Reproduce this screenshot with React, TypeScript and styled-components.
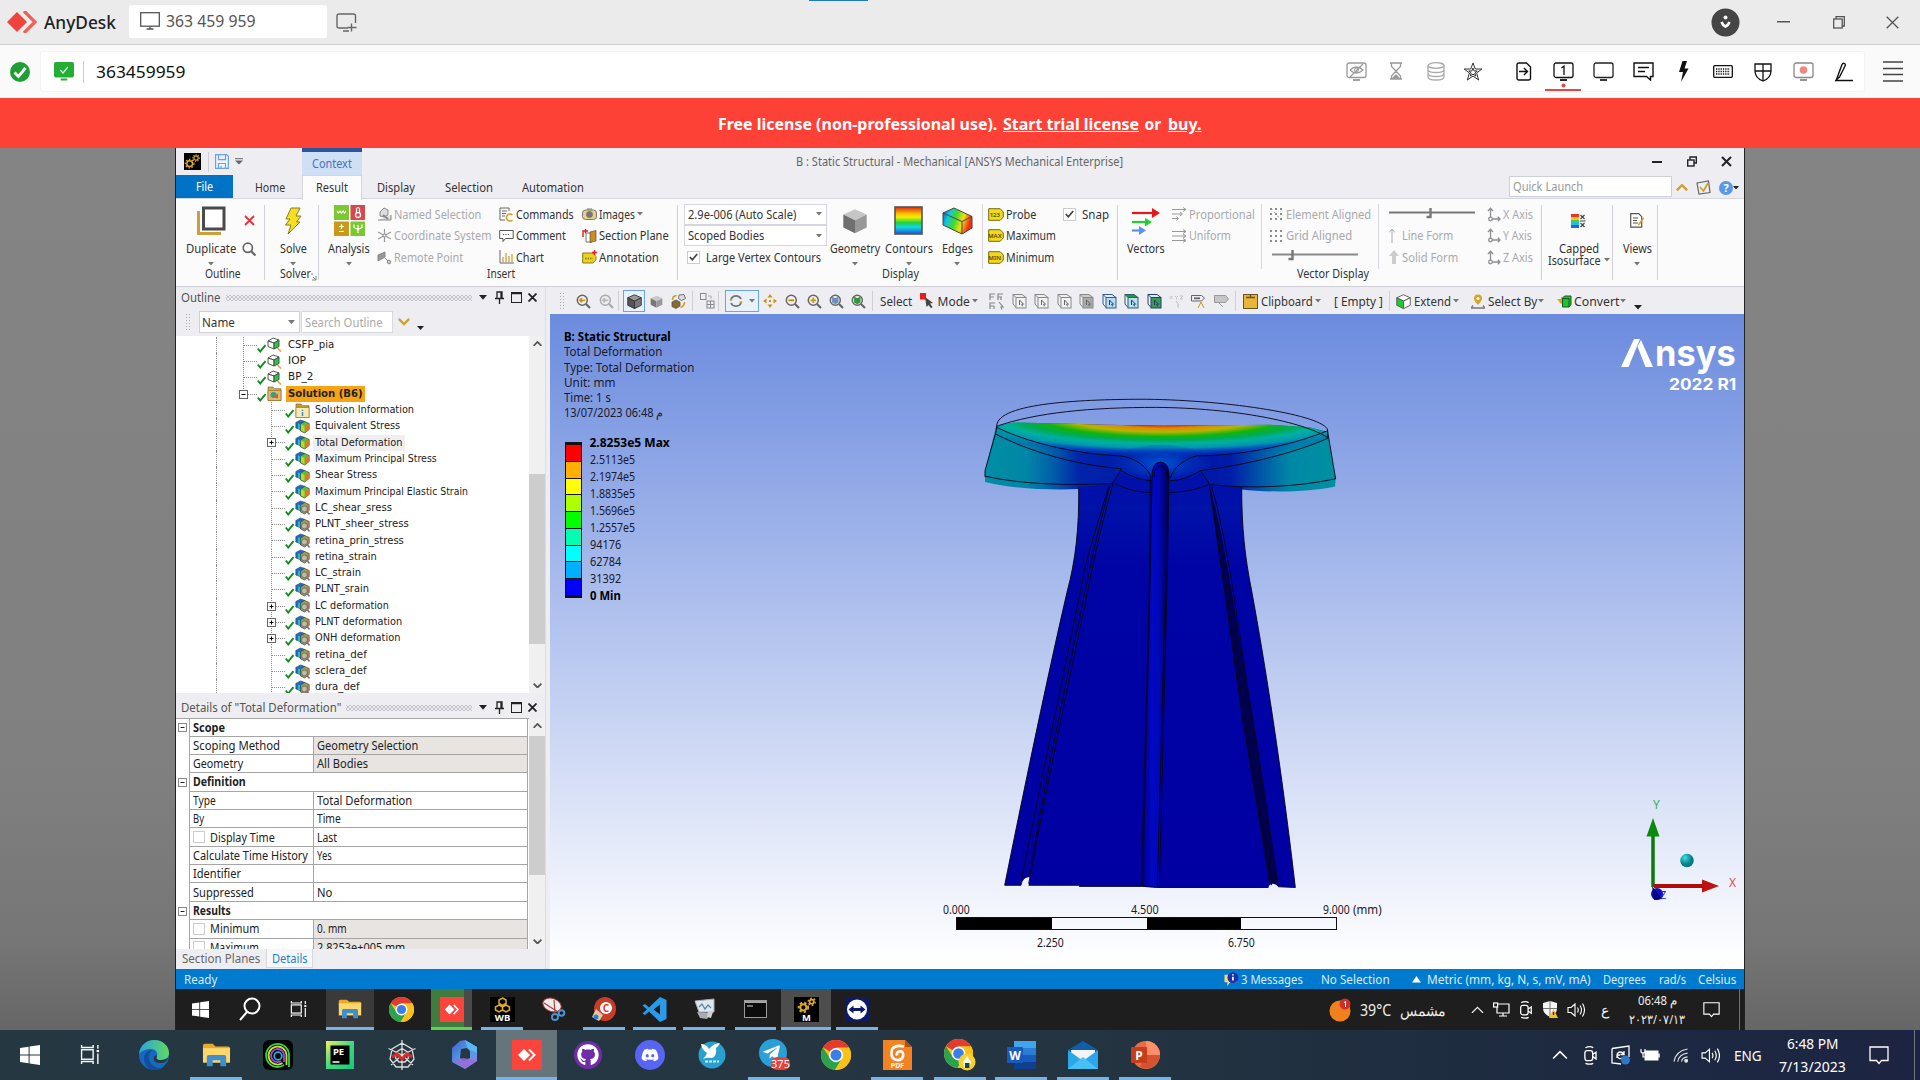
import React, { useLayoutEffect, useRef, useState } from "react";
import styled, { createGlobalStyle } from "styled-components";
import { FaGithub, FaDiscord, FaTelegramPlane } from "react-icons/fa";

const UI = '"Noto Sans", "Open Sans", sans-serif';
const TREE = '"DejaVu Sans", sans-serif';

const Global = createGlobalStyle`
  * { box-sizing: border-box; }
  html, body { margin: 0; padding: 0; overflow: hidden; background: #808080; }
  body { font-family: ${UI}; font-size: 12px; color: #333; }
  svg { display: block; flex: none; }
`;

/* ---------- text that keeps a given advance width ---------- */
const FitBox = styled.span<{ $w: number }>`
  display: inline-block; flex: none; width: ${(p) => p.$w}px; white-space: nowrap;
`;
const FitInner = styled.span`
  display: inline-block; transform-origin: 0 50%; white-space: pre;
`;
function Fit({ w, children }: { w: number; children: React.ReactNode }) {
  const ref = useRef<HTMLSpanElement>(null);
  const [k, setK] = useState(1);
  useLayoutEffect(() => {
    const n = ref.current ? ref.current.offsetWidth : 0;
    if (n) setK(w / n);
  }, [w]);
  return (
    <FitBox $w={w}>
      <FitInner ref={ref} style={{ transform: `scaleX(${k})` }}>{children}</FitInner>
    </FitBox>
  );
}

/* ---------- generic pieces ---------- */
const Gap = styled.div<{ $w: number }>`flex: none; width: ${(p) => p.$w}px;`;
const PanelGap = styled.div`flex: none; height: 4px;`;
const Slot = styled.div<{ $w: number; $f?: number }>`
  flex: none; width: ${(p) => p.$w}px; display: flex; align-items: center; justify-content: center; font-size: ${(p) => p.$f ?? 12}px;
`;
const Caret = ({ c = "#777", s = 7 }: { c?: string; s?: number }) => (
  <svg width={s} height={s * 0.6} viewBox="0 0 10 6"><path d="M0 0H10L5 6Z" fill={c} /></svg>
);

/* ---------- AnyDesk window ---------- */
const Page = styled.div`width: 1920px; height: 1080px; display: flex; flex-direction: column; overflow: hidden;`;
const TitleBar = styled.div`
  position: relative; height: 45px; flex: none; display: flex; align-items: center; background: #ebebeb;
  border-bottom: 1px solid #cfcfcf; padding-left: 7px;
`;
const TopMark = styled.div`position: absolute; left: 809px; top: 0; width: 59px; height: 1px; background: #1f78c8;`;
const Brand = styled.div`font-size: 18px; font-weight: 500; color: #222; margin-left: 7px; line-height: 42px;`;
const SessionTab = styled.div`
  margin: 0 9px 2px 13px; width: 198px; height: 33px; background: #fff; border-radius: 2px; display: flex; align-items: center;
  padding: 0 0 1px 11px; gap: 6px; font-size: 16.5px; color: #555;
`;
const WinButtons = styled.div`margin-left: auto; display: flex; align-items: center; color: #555;`;
const AddressBar = styled.div`
  height: 53px; flex: none; background: #fafafa; display: flex; align-items: center; padding-left: 10px;
`;
const AddressField = styled.div`
  margin-left: 10px; width: 1825px; height: 41px; background: #fff; border: 1px solid #f3f3f3; border-radius: 3px;
  display: flex; align-items: center; padding-left: 13px; font-size: 17px; color: #111;
`;
const FieldSep = styled.div`width: 1px; height: 22px; background: #ccc; margin: 0 12px 0 9px;`;
const ActiveTool = styled.div`
  flex: none; width: 36px; height: 39px; border-bottom: 2px solid #e04a44; display: flex; flex-direction: column; align-items: center; padding-top: 10px;
`;
const LicenseBar = styled.div`
  height: 50px; flex: none; background: #fe4137; color: #fff; font-weight: 700; font-size: 15.5px;
  display: flex; align-items: center; justify-content: center; gap: 6px; padding: 2px 2px 0 0;
`;
const Link = styled.span`text-decoration: none;`;
const Stage = styled.div`
  height: 882px; flex: none; display: flex; padding-left: 175px;
  background: linear-gradient(#848484 0%, #808080 70%, #767676 90%, #666 100%);
`;

/* ---------- remote desktop ---------- */
const Remote = styled.div`
  width: 1570px; height: 882px; border-left: 1px solid #222; border-right: 1px solid #222; background: #eeeef2;
  display: flex; flex-direction: column; overflow: hidden;
`;
const AppTitle = styled.div`height: 27px; flex: none; display: flex; align-items: center; color: #666;`;
const Context = styled.div`
  width: 60px; height: 27px; background: #cfdff5; border-top: 4px solid #2b569a; color: #4a72b8; display: flex; justify-content: center;
  align-items: center; padding: 0 1px 1px 0;
`;
const TabRow = styled.div`height: 23px; flex: none; display: flex; align-items: center; color: #333; padding-top: 2px;`;
const FileTab = styled.div`
  width: 57px; height: 23px; margin-top: -2px; background: #0173c7; color: #fff; display: flex; align-items: center; justify-content: center;
`;
const ActiveTab = styled.div`
  width: 60px; height: 25px; margin-top: -1px; background: #fcfcfd; border: 1px solid #d4d6dc; border-bottom: 0; display: flex; align-items: center;
  justify-content: center; z-index: 1; padding-right: 1px;
`;
const QuickLaunch = styled.div`
  width: 163px; height: 21px; margin-top: -2px; background: #fff; border: 1px solid #cdd0da; color: #999; padding-left: 3px; display: flex; align-items: center;
`;
const Ribbon = styled.div`
  height: 89px; flex: none; display: flex; background: #fbfbfc; border-top: 1px solid #d6d7dc; border-bottom: 1px solid #cdced4; color: #333;
`;
const Group = styled.div<{ $w: number }>`
  position: relative; flex: none; width: ${(p) => p.$w}px; height: 87px; display: flex; flex-direction: column;
  &::after { content: ""; position: absolute; right: 1px; top: 6px; width: 1px; height: 75px; background: #cfd0d8; }
`;
const GroupBody = styled.div`height: 68px; flex: none; display: flex; padding-top: 4.5px;`;
const GroupLabel = styled.div<{ $x: number }>`padding-left: ${(p) => p.$x}px; line-height: 15px; margin-top: -1px; display: flex; align-items: flex-end; gap: 0;`;
const Sep = styled.div`flex: none; width: 1px; height: 65px; background: #d6d7e4;`;
const Big = styled.div<{ $w: number }>`
  flex: none; width: ${(p) => p.$w}px; display: flex; flex-direction: column; align-items: center; line-height: 14px;
`;
const BigIcon = styled.div`flex: none; height: 38px; display: flex; align-items: center; justify-content: center; padding-bottom: 4px;`;
const BigArrow = styled.div`flex: none; height: 17px; display: flex; align-items: center;`;
const TwoLine = styled.div`flex: none; display: flex; align-items: center; gap: 3px; line-height: 11px; margin-top: -1px;`;
const Col = styled.div<{ $w: number }>`flex: none; width: ${(p) => p.$w}px; display: grid; grid-template-rows: repeat(3, 21.5px);`;
const Small = styled.div<{ $off?: boolean; $gap?: number; $x?: number }>`
  display: flex; align-items: center; gap: ${(p) => p.$gap ?? 2}px; padding-left: ${(p) => p.$x ?? 0}px; color: ${(p) => (p.$off ? "#a9a9ad" : "#333")};
`;
const Combo = styled.div`
  width: 143px; height: 21px; background: #fff; border: 1px solid #d5d6e2; display: flex; align-items: center; justify-content: space-between; padding: 0 4px 0 3px;
`;
const Check = styled.div`width: 13px; height: 13px; background: #fff; border: 1px solid #ccc; display: flex; align-items: center; justify-content: center;`;

const Body = styled.div`height: 682px; flex: none; display: flex;`;
const Left = styled.div`width: 370px; flex: none; display: flex; flex-direction: column; border-right: 1px solid #dcdce2;`;
const PanelHead = styled.div`height: 21px; flex: none; display: flex; align-items: center; padding-left: 5px; color: #555;`;
const Dots = styled.div<{ $w: number }>`
  width: ${(p) => p.$w}px; height: 6px; margin: 0 5px;
  background-image: radial-gradient(#c2c2ca 0.7px, transparent 0.9px), radial-gradient(#c2c2ca 0.7px, transparent 0.9px);
  background-size: 4px 4px; background-position: 0 0, 2px 2px;
`;
const SearchRow = styled.div`height: 28px; flex: none; display: flex; align-items: center; padding: 0 0 0 9px;`;
const Grip = styled.div<{ $h: number }>`
  width: 6px; height: ${(p) => p.$h}px; background-image: radial-gradient(#aaa 0.8px, transparent 1px); background-size: 3px 3px;
`;
const NameBox = styled.div`
  width: 101px; height: 22px; background: #fff; border: 1px solid #d0d0da; display: flex; align-items: center; justify-content: space-between; padding: 0 4px 0 2px;
`;
const SearchBox = styled.div`width: 92px; height: 22px; background: #fff; border: 1px solid #d8d8e0; color: #aaa; padding-left: 3px; display: flex; align-items: center;`;
const Scrolled = styled.div<{ $h: number }>`height: ${(p) => p.$h}px; flex: none; display: flex; background: #fff; overflow: hidden;`;
const ScrollBar = styled.div`width: 17px; flex: none; background: #f0f0f0; display: flex; flex-direction: column; align-items: center; justify-content: space-between; padding: 5px 1px 5px 0;`;
const Thumb = styled.div<{ $t: number; $h: number; $b: number }>`width: 16px; height: ${(p) => p.$h}px; margin: ${(p) => p.$t}px 0 ${(p) => p.$b}px; background: #cdcdcd;`;
const Tree = styled.div`width: 353px; flex: none; font-family: ${TREE}; font-size: 11.3px; color: #222; padding-top: 0.6px;`;
const TreeRow = styled.div`height: 16.32px; display: flex; align-items: center; padding-left: 40px; overflow: visible;`;
const Guide = styled.div<{ $w: number; $line?: boolean }>`
  width: ${(p) => p.$w}px; height: 16.32px; border-left: ${(p) => (p.$line ? "1px dotted #8b8b8b" : "0")};
`;
const TreeLabel = styled.div<{ $hot?: boolean; $sel?: boolean }>`
  height: 16px; line-height: 16px; padding: 0 2px; font-weight: ${(p) => (p.$hot ? 700 : 400)};
  background: ${(p) => (p.$hot ? "#f6a314" : p.$sel ? "#efefef" : "transparent")};
`;
const Details = styled.div`width: 353px; flex: none; border-top: 1px solid #a5a5a5;`;
const DetailRow = styled.div`height: 18.36px; display: flex; &:first-child { height: 17.6px; }`;
const Gutter = styled.div`width: 14px; flex: none; display: flex; align-items: center; justify-content: center; border-right: 1px solid #a5a5a5;`;
const Cell = styled.div<{ $w: number; $ro?: boolean; $bold?: boolean }>`
  width: ${(p) => p.$w}px; flex: none; display: flex; align-items: center; gap: 5px; padding: 0 0 0 3px; color: #222; font-weight: ${(p) => (p.$bold ? 700 : 400)};
  border-right: 1px solid #a5a5a5; border-bottom: 1px solid #a5a5a5; background: ${(p) => (p.$ro ? "#e8e4e1" : "#fff")}; line-height: 15px;
`;
const SmallBox = styled.div`width: 12px; height: 12px; border: 1px solid #ccc; background: #fff;`;
const BottomTabs = styled.div`height: 20px; flex: none; display: flex; align-items: center; padding: 0 0 1px 6px; color: #666;`;
const DetailsTab = styled.div`margin-left: 6px; width: 47px; height: 19px; background: #f7f7f9; border: 1px solid #d8d8e0; border-top: 0; color: #1b7fd0; display: flex; align-items: center; justify-content: center;`;

const Right = styled.div`width: 1194px; margin-left: 4px; flex: none; display: flex; flex-direction: column;`;
const Toolbar = styled.div`height: 27px; flex: none; display: flex; align-items: center; color: #333; padding: 1px 0 0 9px;`;
const ToolSep = styled.div`flex: none; width: 1px; height: 20px; background: #cfcfd6;`;
const Pressed = styled.div<{ $w: number }>`
  flex: none; width: ${(p) => p.$w}px; height: 22px; border: 1px solid #6ba4e6; background: #e8f0fa; display: flex; align-items: center; justify-content: center; gap: 6px;
`;
const Viewport = styled.div`
  position: relative; height: 655px; flex: none; color: #1a1a2a; background: linear-gradient(#6b8bde, #fefeff 98%);
`;
const At = styled.div<{ $x: number; $y: number }>`position: absolute; left: ${(p) => p.$x}px; top: ${(p) => p.$y}px;`;
const Info = styled.div`display: flex; flex-direction: column; line-height: 15.3px; font-size: 12px;`;
const Strong = styled.div`font-weight: 700; color: #000;`;
const Legend = styled.div`display: flex; gap: 7.5px;`;
const LegendBar = styled.div`width: 17px; height: 156px; border: 1px solid #111; border-top-width: 3px; border-bottom-width: 3px; display: grid; grid-template-rows: repeat(9, 1fr); gap: 1px; background: #111;`;
const Swatch = styled.div<{ $c: string }>`background: ${(p) => p.$c};`;
const LegendText = styled.div`margin-top: -8px; line-height: 17px; font-size: 12px; display: flex; flex-direction: column;`;
const Version = styled.div`font-family: Inter, sans-serif; font-weight: 700; font-size: 16.5px; color: #fff; line-height: 20px;`;
const Wordmark = styled.div`display: flex; font-family: Inter, sans-serif; font-weight: 700; font-size: 37px; color: #fff; line-height: 40px;`;
const ScaleTop = styled.div<{ $t?: number }>`display: flex; font-size: 12px; line-height: 14px; margin-top: ${(p) => p.$t ?? 0}px;`;
const ScaleBar = styled.div`display: grid; grid-template-columns: repeat(4, 1fr); width: 381px; height: 13px; border: 1px solid #111; margin-left: 13px;`;
const ScaleSeg = styled.div<{ $on: boolean }>`background: ${(p) => (p.$on ? "#000" : "transparent")};`;

const Status = styled.div`height: 20px; flex: none; background: #007ace; color: #dcecfa; display: flex; align-items: center; padding: 1px 0 0 8px;`;
const RemoteTaskbar = styled.div`height: 41px; flex: none; background: #1e1e1e; display: flex; color: #eee;`;
const TaskSlot = styled.div<{ $w: number; $bg?: string; $line?: string }>`
  flex: none; width: ${(p) => p.$w}px; display: flex; align-items: center; justify-content: center; background: ${(p) => p.$bg ?? "transparent"};
  border-bottom: 3px solid ${(p) => p.$line ?? "transparent"}; border-top: 2px solid transparent; background-clip: border-box;
`;
const Clock = styled.div`display: flex; flex-direction: column; align-items: center; justify-content: center; line-height: 19px; font-size: 12.5px;`;
const Taskbar = styled.div`
  height: 50px; flex: none; display: flex; color: #fff; background: linear-gradient(90deg, #253842 0%, #243541 55%, #1d2a40 82%, #1c2443 100%);
`;
const MainClock = styled.div`display: flex; flex-direction: column; align-items: center; justify-content: center; line-height: 23px; font-size: 14.5px;`;
const EndLine = styled.div`width: 1px; height: 100%; background: #6d7480;`;

/* ---------- small drawings ---------- */
const Monitor = ({ c = "#222", children, fill = "none" }: { c?: string; fill?: string; children?: React.ReactNode }) => (
  <svg width="21" height="19" viewBox="0 0 21 19" fill="none" stroke={c} strokeWidth="1.3">
    <rect x="1" y="1" width="19" height="14.5" rx="2" fill={fill} /><path d="M7 18h7" strokeWidth="1.8" />{children}
  </svg>
);
const Magnifier = ({ c = "#8d6f2a", s = "+", off = false }: { c?: string; s?: string; off?: boolean }) => (
  <svg width="15" height="15" viewBox="0 0 15 15" fill="none" stroke={off ? "#aaa" : "#666"} strokeWidth="1.5">
    <circle cx="6.3" cy="6.3" r="5" fill={off ? "none" : "#f4f0e4"} /><path d="M10 10l4 4" strokeWidth="2.2" />
    <g stroke={off ? "#bbb" : c} strokeWidth="1.8">
      {s === "+" && <path d="M3.5 6.3h5.6M6.3 3.5v5.6" />}{s === "-" && <path d="M3.5 6.3h5.6" />}
      {s === "<" && <path d="M9.3 6.3H4M6 4.2L3.8 6.3 6 8.4" />}{s === "o" && <path d="M4 4l2.300 1.300L8.600 4v4L6.300 9.300 4 8z" fill={c} />}
    </g>
  </svg>
);
const Cube = ({ a, b, c, w = 15, line = "none" }: { a: string; b: string; c: string; w?: number; line?: string }) => (
  <svg width={w} height={w} viewBox="0 0 20 20" stroke={line} strokeWidth="1.2" strokeLinejoin="round">
    <path d="M10 1L19 5 10 9.5 1 5Z" fill={a} /><path d="M1 5L10 9.5V19.5L1 15Z" fill={b} /><path d="M19 5L10 9.5V19.5L19 15Z" fill={c} />
  </svg>
);
const PickCube = ({ c, fill = "#f2f2f2", top = "none" }: { c: string; fill?: string; top?: string }) => (
  <svg width="15" height="16" viewBox="0 0 15 16" fill="none" stroke={c} strokeWidth="1">
    <path d="M1 1.500h9l4 3H4z" fill={top} /><path d="M1 1.500v9.500l3 3.500" /><rect x="4" y="4.500" width="10" height="10.500" fill={fill} />
    <path d="M7.500 12V7l4 4.200H9.600l1 2.200" stroke={c === "#888" ? "#666" : "#245"} />
  </svg>
);
const Chev = ({ c, up = false, s = 9, t = 2 }: { c: string; up?: boolean; s?: number; t?: number }) => (
  <svg width={s} height={s * 0.6} viewBox="0 0 10 6" fill="none" stroke={c} strokeWidth={t}><path d={up ? "M.7 5.3L5 1l4.3 4.3" : "M.7 .7L5 5 9.3 .7"} /></svg>
);
const Gears = ({ w = 17, h = 17, m = false }: { w?: number; h?: number; m?: boolean }) => (
  <svg width={w} height={h} viewBox="0 0 24 24" preserveAspectRatio="none">
    <rect width="24" height="24" fill="#000" />
    <g fill="none" stroke="#e0a82c"><circle cx={m ? 9 : 8} cy={m ? 10 : 15} r={m ? 3 : 4} strokeWidth="2" /><circle cx={m ? 9 : 8} cy={m ? 10 : 15} r={m ? 4.6 : 6} strokeWidth="1.8" strokeDasharray="2.2 2.2" />
      <circle cx="17" cy={m ? 4.5 : 7} r={m ? 2 : 3} strokeWidth="1.6" /><circle cx="17" cy={m ? 4.5 : 7} r={m ? 3.3 : 4.6} strokeWidth="1.5" strokeDasharray="1.7 1.7" /></g>
    {m && <text x="12" y="23.500" fontSize="9" fontWeight="700" fill="#fff" textAnchor="middle" fontFamily="Noto Sans">M</text>}
  </svg>
);
const Win = ({ s }: { s: number }) => (
  <svg width={s} height={s} viewBox="0 0 20 20" fill="#fff"><path d="M0 3L8.6 1.8V9.4H0ZM9.6 1.6L20 0V9.4H9.6ZM0 10.4H8.6V18.2L0 17ZM9.6 10.4H20V20L9.6 18.4Z" /></svg>
);
const TaskView = ({ s }: { s: number }) => (
  <svg width={s} height={s} viewBox="0 0 20 20" fill="none" stroke="#fff" strokeWidth="1.3"><rect x="1.5" y="5.5" width="11" height="9" /><path d="M1.5 1v2.3h11V1M1.5 19v-2.3h11V19M17 1v3.5M17 9v10" /><path d="M15.8 6.7h2.4" strokeWidth="2" /></svg>
);
const Explorer = ({ w, h }: { w: number; h: number }) => (
  <svg width={w} height={h} viewBox="0 0 30 28" preserveAspectRatio="none"><path d="M1 3q0-2 2-2h8l3 3h13q2 0 2 2v3H1z" fill="#e8a92c" /><rect x="1" y="6" width="28" height="17" fill="#fcd76b" /><path d="M5 27V16q0-2 2-2h16q2 0 2 2v11h-6v-7h-8v7z" fill="#3f8fd0" /></svg>
);
const Chrome = ({ s }: { s: number }) => (
  <svg width={s} height={s} viewBox="0 0 24 24">
    <circle cx="12" cy="12" r="12" fill="#fbc116" /><path d="M12 12L1.6 6A12 12 0 0 1 22.4 6Z" fill="#e33b2e" /><path d="M1.6 6A12 12 0 0 0 11 24L16.8 14.6 7.2 14.6Z" fill="#2ba24c" /><path d="M12 6h10.400a12 12 0 0 1-11 18l5.600-9.600z" fill="#fbc116" />
    <circle cx="12" cy="12" r="5.700" fill="#fff" /><circle cx="12" cy="12" r="4.400" fill="#3a7ee8" />
  </svg>
);
const AnyTile = ({ w, h }: { w: number; h: number }) => (
  <svg width={w} height={h} viewBox="0 0 30 30" preserveAspectRatio="none"><rect width="30" height="30" fill="#fb443b" /><path d="M12 9L18 15 12 21 6 15Z" fill="#fff" /><path d="M17 9.500L22.500 15 17 20.500" fill="none" stroke="#fff" strokeWidth="2" /></svg>
);
const Speaker = ({ s }: { s: number }) => (
  <svg width={s} height={s} viewBox="0 0 18 18" fill="none" stroke="#fff" strokeWidth="1.1"><path d="M1 6.500h3L8 3v12L4 11.500H1zM10.500 6.500q1.600 2.500 0 5M13 4.500q3 4.500 0 9M15.500 2.500q4 6.500 0 13" /></svg>
);
const Meet = ({ s }: { s: number }) => (
  <svg width={s} height={s} viewBox="0 0 18 18" fill="none" stroke="#fff" strokeWidth="1.2"><rect x="3.500" y="5" width="7" height="9" rx="2" /><path d="M10.500 8.500l3-2v6l-3-2M4 2.500q4-2 7 0M4 16.500q4 1.500 7 0" /></svg>
);
const Notify = ({ s }: { s: number }) => (
  <svg width={s} height={s} viewBox="0 0 20 20" fill="none" stroke="#fff" strokeWidth="1.3"><path d="M1 2h18v13.500h-6.500L10 18.500 7.500 15.500H1z" /></svg>
);

const Tag = ({ t }: { t: string }) => (
  <svg width="16" height="13" viewBox="0 0 16 13"><path d="M.7.7h11.500L15.300 4v5L12.200 12.300H.7z" fill="#f1d91c" stroke="#7c6a12" /><text x="6.800" y="9" fontSize="6" fontWeight="700" textAnchor="middle" fill="#6a5a10" fontFamily="Noto Sans">{t}</text></svg>
);
const AxisIcon = () => (
  <svg width="14" height="15" viewBox="0 0 14 15" fill="none" stroke="#8e8e92" strokeWidth="1.3"><path d="M3.500 12V1.500M1 4l2.500-2.700L6 4M4 12h9M10.800 9.800L13 12l-2.200 2.200" /><circle cx="3.500" cy="12" r="1.800" fill="#fff" /></svg>
);
const GridDots = ({ skew = false }: { skew?: boolean }) => (
  <svg width="15" height="14" viewBox="0 0 15 14" fill="none" stroke="#8d8d90" strokeWidth="2.200" strokeDasharray="2 3"><path d="M1 2h13M1 7h13" /><path d="M1 12h13" />{skew && <path d="M2 1l9 11" strokeWidth="1" />}</svg>
);
function Chk() {
  return <svg width="9" height="8" viewBox="0 0 9 8" fill="none" stroke="#444" strokeWidth="1.7"><path d="M.8 4L3.300 6.800 8.200 1" /></svg>;
}

/* ---------- outline tree ---------- */
type Node = { t: string; w: number; k: "load" | "sol" | "info" | "res" | "probe"; box?: "+" | "-"; sel?: boolean };
const nodes: Node[] = [
  { t: "CSFP_pia", w: 46, k: "load" }, { t: "IOP", w: 18, k: "load" }, { t: "BP_2", w: 25, k: "load" },
  { t: "Solution (B6)", w: 75, k: "sol", box: "-" },
  { t: "Solution Information", w: 99, k: "info" }, { t: "Equivalent Stress", w: 85, k: "res" },
  { t: "Total Deformation", w: 88, k: "res", box: "+", sel: true }, { t: "Maximum Principal Stress", w: 122, k: "res" },
  { t: "Shear Stress", w: 62, k: "res" }, { t: "Maximum Principal Elastic Strain", w: 153, k: "res" },
  { t: "LC_shear_sress", w: 77, k: "probe" }, { t: "PLNT_sheer_stress", w: 94, k: "probe" },
  { t: "retina_prin_stress", w: 89, k: "probe" }, { t: "retina_strain", w: 62, k: "probe" },
  { t: "LC_strain", w: 46, k: "probe" }, { t: "PLNT_srain", w: 54, k: "probe" },
  { t: "LC deformation", w: 74, k: "probe", box: "+" }, { t: "PLNT deformation", w: 87, k: "probe", box: "+" },
  { t: "ONH deformation", w: 85, k: "probe", box: "+" }, { t: "retina_def", w: 52, k: "probe" },
  { t: "sclera_def", w: 52, k: "probe" }, { t: "dura_def", w: 45, k: "probe" },
];
const Joint = ({ box, end }: { box?: string; end?: boolean }) => (
  <svg width="18" height="16.32" viewBox="0 0 18 16.32" stroke="#8b8b8b" fill="none">
    <path d={end ? "M4.500 0V8" : "M4.500 0V16.500"} strokeDasharray="1 1" /><path d="M5 8.500H18" strokeDasharray="1 1" />
    {box && <><rect x=".5" y="4.500" width="8" height="8" fill="#fff" stroke="#666" /><path d={box === "+" ? "M2.500 8.500h4M4.500 6.500v4" : "M2.500 8.500h4"} stroke="#000" strokeWidth="1" /></>}
  </svg>
);
const TreeIcon = ({ k }: { k: Node["k"] }) => (
  <svg width="15" height="15" viewBox="0 0 15 15">
    {k === "load" && <g stroke="#444" strokeWidth=".9"><path d="M1 4l5-3 6 2-5 3z" fill="#fff" /><path d="M1 4l6 2v6L1 9.500z" fill="#f4fff4" /><path d="M12 3L7 6v6l5-2.500z" fill="#25c745" /><path d="M10.500 11l3.500 3.500" stroke="#e8a03a" strokeWidth="1.600" /></g>}
    {(k === "sol" || k === "info") && <g><path d="M1 1h5l1.500 1.700H14V14.500H1z" fill={k === "sol" ? "#d9a94c" : "#c49a2e"} stroke="#8b6b22" strokeWidth=".7" /><path d="M1 4.500h13v10H1z" fill={k === "sol" ? "#dfb878" : "#f7ecb0"} stroke="#8b6b22" strokeWidth=".6" />
      {k === "sol" ? <><circle cx="6.500" cy="9" r="3" fill="#2aa57c" /><path d="M6 11l5-3.500v5z" fill="#d85a2a" /></> : <path d="M7.500 9v4M7.500 6.800v1.200" stroke="#3a8fd0" strokeWidth="1.500" />}</g>}
    {(k === "res" || k === "probe") && <g><path d="M.8 3.500L5.500 1l4.500 1.500-2.500 9L.8 9z" fill="#1c6ad0" stroke="#345" strokeWidth=".6" /><path d="M3 4.500l3 .8v5.500L3 9.500z" fill="#1ec0c8" /><path d="M5.500 5L9.500 2.500l4.700 2v6l-4.500 3.500-4.200-2z" fill={k === "res" ? "#54c23c" : "#9aa04a"} stroke="#444" strokeWidth=".7" /><path d="M9.800 7L14 5v5.500l-4.200 3.200z" fill={k === "res" ? "#e5732a" : "#b07a5a"} /><path d="M6 5.500l3.500 1.500v6L6 11.500z" fill={k === "res" ? "#b6dc2e" : "#8aa08a"} />
      {k === "probe" && <><circle cx="9.500" cy="9" r="3" fill="#e4e4dc" fillOpacity=".5" stroke="#777" strokeWidth="1.100" /><path d="M11.500 11l3 3.500" stroke="#777" strokeWidth="1.600" /></>}</g>}
  </svg>
);
const TreeCheck = () => (<svg width="9" height="16" viewBox="0 0 9 16" fill="none" stroke="#0f8a1e" strokeWidth="1.9"><path d="M.8 11.500L3.200 14.500 8.500 8" /></svg>);

/* ---------- details grid ---------- */
const details: { h?: [string, number]; l?: [string, number]; v?: [string, number]; ro?: boolean; box?: boolean }[] = [
  { h: ["Scope", 32] }, { l: ["Scoping Method", 87], v: ["Geometry Selection", 101], ro: true }, { l: ["Geometry", 50], v: ["All Bodies", 51], ro: true },
  { h: ["Definition", 53] }, { l: ["Type", 23], v: ["Total Deformation", 95] }, { l: ["By", 11], v: ["Time", 24] },
  { l: ["Display Time", 65], v: ["Last", 20], box: true }, { l: ["Calculate Time History", 115], v: ["Yes", 15] }, { l: ["Identifier", 48] },
  { l: ["Suppressed", 61], v: ["No", 15] }, { h: ["Results", 38] }, { l: ["Minimum", 49], v: ["0. mm", 30], ro: true, box: true },
  { l: ["Maximum", 49], v: ["2.8253e+005 mm", 88], ro: true, box: true },
];
const legend: [string, number][] = [["2.5113e5", 45], ["2.1974e5", 45], ["1.8835e5", 45], ["1.5696e5", 45], ["1.2557e5", 45], ["94176", 31], ["62784", 31], ["31392", 31]];
const swatches = ["#ff0000", "#ffb000", "#ffff00", "#b0ff00", "#00ff00", "#00ffb0", "#00ffff", "#00b0ff", "#0000ff"];

const HeadTools = () => (
  <>
    <Slot $w={12}><Caret c="#222" s={8} /></Slot>
    <Slot $w={20}><svg width="9" height="13" viewBox="0 0 9 13" fill="none" stroke="#222" strokeWidth="1.3"><path d="M2 1h5v6.500H2zM0 7.500h9M4.500 8v5M6 1v6" /></svg></Slot>
    <Slot $w={14}><svg width="11" height="11" viewBox="0 0 11 11" fill="none" stroke="#222"><rect x=".5" y=".5" width="10" height="10" /><path d="M0 1.500h11" strokeWidth="1.5" /></svg></Slot>
    <Slot $w={19}><svg width="9" height="9" viewBox="0 0 9 9" stroke="#222" strokeWidth="1.8"><path d="M.5.5l8 8M8.500.5l-8 8" /></svg></Slot>
  </>
);

/* deformed optic-nerve-head body with contour colouring */
const Model = () => (
  <svg width="420" height="580" viewBox="0 0 1260 1568" preserveAspectRatio="none">
    <defs>
      <linearGradient id="side" gradientUnits="userSpaceOnUse" x1="105" y1="0" x2="1157" y2="0">
        <stop offset="0" stopColor="#008ea4" /><stop offset=".12" stopColor="#0086a6" /><stop offset=".19" stopColor="#0060a8" /><stop offset=".27" stopColor="#0024aa" /><stop offset=".5" stopColor="#0014a6" /><stop offset=".7" stopColor="#001ca8" /><stop offset=".79" stopColor="#0058a8" /><stop offset=".87" stopColor="#0088a6" /><stop offset="1" stopColor="#0090a0" />
      </linearGradient>
      <radialGradient id="top" gradientUnits="userSpaceOnUse" cx="0" cy="0" r="120" gradientTransform="translate(640 95) scale(6.6 1)">
        <stop offset="0" stopColor="#e02000" /><stop offset=".24" stopColor="#d83800" /><stop offset=".29" stopColor="#dc8a00" /><stop offset=".38" stopColor="#b8b400" /><stop offset=".48" stopColor="#10b410" /><stop offset=".56" stopColor="#00ac50" /><stop offset=".64" stopColor="#00b0a0" /><stop offset=".74" stopColor="#0098b0" /><stop offset=".82" stopColor="#0050c4" stopOpacity=".75" /><stop offset=".95" stopColor="#0030c0" stopOpacity="0" />
      </radialGradient>
      <radialGradient id="lit" gradientUnits="userSpaceOnUse" cx="0" cy="0" r="100" gradientTransform="translate(632 225) scale(1.7 .6)"><stop offset="0" stopColor="#0058d0" /><stop offset="1" stopColor="#0030b8" stopOpacity="0" /></radialGradient>
      <linearGradient id="body" x1="0" y1="0" x2="0" y2="1"><stop offset="0" stopColor="#0018aa" /><stop offset=".2" stopColor="#0004a4" /><stop offset="1" stopColor="#0000a2" /></linearGradient>
      <linearGradient id="tube" x1="0" y1="0" x2="1" y2="0"><stop offset="0" stopColor="#000090" /><stop offset=".35" stopColor="#0008c4" /><stop offset=".6" stopColor="#0008b8" /><stop offset="1" stopColor="#000048" /></linearGradient>
    </defs>
    <path d="M386 285C388 400 376 490 352 570C290 810 210 1160 164 1366H213C216 1350 226 1342 240 1343L236 1366H388V1369H578L620 1372H955C960 1360 972 1358 985 1370L1036 1372C1005 1130 960 840 905 570C885 480 875 400 875 285Z" fill="url(#body)" />
    <path d="M138 125L190 115L300 117L470 121L640 124L960 121L1080 128L1133 140L1157 268L1155 288C1080 303 960 305 876 296V290L640 300L388 288V295C290 298 190 294 105 276V248Z" fill="url(#side)" />
    <path d="M515 245C600 270 690 270 752 245L780 285L876 290L870 340H386L388 290L487 280Z" fill="#0010a8" />
    <path d="M138 127L190 115L300 117L470 121L640 124L960 121L1080 128L1133 143C1010 182 860 205 740 208C700 216 668 240 660 262H605C595 235 560 210 510 207C370 200 230 168 138 127Z" fill="url(#top)" />
    <path d="M138 127C230 168 370 200 510 207L515 240C350 225 230 185 135 145ZM1133 143C1010 182 860 205 740 208L752 242C900 225 1040 190 1135 157Z" fill="url(#top)" opacity=".35" />
    <ellipse cx="632" cy="225" rx="150" ry="50" fill="url(#lit)" />
    <path d="M778 285C830 440 880 780 920 980L985 1370C975 1356 965 1358 958 1366L880 930C850 740 810 480 778 285Z" fill="#00004c" />
    <path d="M606 262Q606 222 632 222Q657 222 657 262L652 520L628 1370H578L598 560Z" fill="url(#tube)" />
    <g fill="none" stroke="#060618" strokeWidth="2.6">
      <path d="M140 125C140 60 410 52 590 52C840 55 1120 95 1133 135L1133 155M140 125C260 88 420 74 620 74C850 76 1060 112 1135 157" />
      <path d="M140 125L138 140L105 245V262M1133 140L1157 268" />
      <path d="M138 127C230 168 370 200 510 205C560 210 595 240 603 262M1133 137C1010 182 860 205 740 205C700 214 668 240 661 265" />
      <path d="M135 145C240 195 380 230 515 240L505 255L487 280C360 286 210 282 105 260M1135 157C1040 195 900 228 752 245L780 283C900 294 1040 290 1157 267" />
      <path d="M515 245C540 262 580 272 605 272M752 245C720 262 690 272 660 272M496 280C530 298 575 304 603 304M776 282C740 298 690 304 660 304" />
      <path d="M386 290C388 400 376 490 352 570C290 810 210 1160 164 1366H213C216 1350 226 1342 240 1343M236 1366H388V1369H578L620 1372H955M985 1370L1036 1372C1005 1130 960 840 905 570C885 480 875 400 875 290" />
      <path d="M475 290C440 400 405 490 397 545C340 800 260 1140 216 1345M489 280C440 440 420 540 400 630C340 880 280 1150 236 1362M480 285C430 450 400 600 380 680C330 900 270 1150 240 1340" />
      <path d="M778 285C810 480 850 740 880 930L965 1366M785 290C840 450 880 780 920 980L985 1368" />
      <path d="M606 262Q606 222 632 222Q657 222 657 262L652 520L628 1370M612 262Q612 232 632 232Q651 232 651 262M606 262L600 560L578 1366M601 262L598 560L574 1366M648 520L622 1370" />
    </g>
  </svg>
);

const GraphicsToolbar = () => (
  <Toolbar>
    <Grip $h={18} /><Gap $w={8} />
    <Slot $w={20}><Magnifier s="<" c="#c9962c" /></Slot><Gap $w={3} /><Slot $w={20}><Magnifier s="<" off /></Slot><Gap $w={2} />
    <ToolSep /><Gap $w={4} />
    <Pressed $w={22}><Cube a="#9a9a9a" b="#555" c="#777" line="#333" /></Pressed>
    <Slot $w={22}><Cube a="#c8c8c8" b="#777" c="#999" w={13} /></Slot>
    <Slot $w={23}><svg width="15" height="15" viewBox="0 0 15 15" stroke="#555" strokeWidth=".8"><path d="M8 1l5-.5 1.500 4-4 2-3-2z" fill="#ddd" /><path d="M1 8l4-2 4 2v4l-4 2.500-4-2z" fill="#8a6b2a" /><path d="M1.500 6q0-4 4-4.500M13.500 8q0 4-4 5.500" fill="none" stroke="#d09a20" strokeWidth="1.600" /></svg></Slot>
    <Gap $w={2} /><ToolSep /><Gap $w={3} />
    <Slot $w={22}><svg width="15" height="16" viewBox="0 0 15 16" fill="none" stroke="#888"><rect x=".5" y=".5" width="5.500" height="6" /><rect x="7" y="8" width="7" height="7" /><path d="M7 11.500h7M10.500 8v7" /><path d="M8 3h3v3" stroke="#aaa" /></svg></Slot>
    <ToolSep /><Gap $w={6} />
    <Pressed $w={34}><svg width="14" height="14" viewBox="0 0 14 14" fill="none" stroke="#777" strokeWidth="1.8"><path d="M2 5a5.500 5.500 0 0 1 10 0M12 9a5.500 5.500 0 0 1-10 0" /><path d="M.8 5.800h2.400M10.800 8.200h2.400" stroke="#d09a20" /></svg><Caret s={6} /></Pressed>
    <Slot $w={22}><svg width="14" height="14" viewBox="0 0 14 14" fill="#c99316"><path d="M7 0l2.500 3.500h-5zM7 14l2.500-3.500h-5zM0 7l3.500-2.500v5zM14 7l-3.500-2.500v5zM6 6h2v2H6z" /></svg></Slot>
    <Slot $w={22}><Magnifier s="-" c="#b88a20" /></Slot><Slot $w={22}><Magnifier s="+" c="#c9962c" /></Slot><Slot $w={22.5}><Magnifier s="o" c="#6d8fc4" /></Slot><Slot $w={22.5}><Magnifier s="o" c="#2f9a3c" /></Slot>
    <Gap $w={1.5} /><ToolSep /><Gap $w={7} />
    <Fit w={32}>Select</Fit><Gap $w={8} />
    <svg width="14" height="16" viewBox="0 0 14 16"><rect width="6" height="6.500" fill="#f01818" /><path d="M5 4l8 6-3 .5 2.500 3.500-1.500 1.300L8.500 12l-2 2z" fill="#444" /></svg><Gap $w={4} />
    <Fit w={32}>Mode</Fit><Gap $w={2} /><Caret s={6} />
    <Gap $w={8} />
    <Slot $w={22}><svg width="16" height="17" viewBox="0 0 16 17" fill="none" stroke="#888" strokeWidth="1.2"><path d="M1 7V1h5M1 4h4M9 7V1h5M9 4h4M12 4v3M1 16v-6h5M1 13h4M5 13v3M10 9l4 5h-2l1 2.500" /></svg></Slot>
    <Slot $w={23}><PickCube c="#888" /></Slot><Slot $w={22.5}><PickCube c="#888" /></Slot><Slot $w={22.5}><PickCube c="#888" /></Slot><Slot $w={22.5}><PickCube c="#888" fill="#aaa" top="#ccc" /></Slot>
    <Slot $w={22.5}><PickCube c="#2d5f8c" fill="#b8dcf4" top="#dfeefa" /></Slot><Slot $w={22.5}><PickCube c="#2d5f6c" fill="#b8dcf4" top="#15a03a" /></Slot><Slot $w={22.5}><PickCube c="#27406c" fill="#3a9a5a" top="#dfeefa" /></Slot>
    <Slot $w={22}><svg width="15" height="13" viewBox="0 0 15 13" stroke="#c2c2c6" fill="none"><path d="M.5 1l3 3M3.500 1l-3 3M6 1l1.500 1.500L9 1M7.500 2.500V4.500M11 1h3l-3 3h3M7 6l3 4H8.500l1 3" /></svg></Slot>
    <Slot $w={22}><svg width="15" height="15" viewBox="0 0 15 15" fill="none" stroke="#666"><path d="M.5 1.500h10l3 2.500-3 3H.5z" /><path d="M3 4.300h6" strokeWidth="1.8" /><path d="M7 14l3-6 3 6" stroke="#c99316" /></svg></Slot>
    <Slot $w={24}><svg width="15" height="14" viewBox="0 0 15 14" fill="#c5c5c8" stroke="#999"><path d="M.5 1.500h11l3 3.500-3 3.500H.5zM5 9l4 4" /></svg></Slot>
    <Gap $w={1} /><ToolSep /><Gap $w={7} />
    <svg width="15" height="15" viewBox="0 0 15 15"><rect x=".5" y=".5" width="14" height="14" fill="#e7b63a" stroke="#6b5420" /><path d="M3 3.500h9M7.500 1v2" stroke="#6b5420" strokeWidth="1.500" /></svg><Gap $w={3} />
    <Fit w={52}>Clipboard</Fit><Gap $w={2} /><Caret s={6} /><Gap $w={13} /><Fit w={49}>[ Empty ]</Fit>
    <Gap $w={6} /><ToolSep /><Gap $w={6} /><Cube a="#fff" b="#18d030" c="#fff" line="#555" /><Gap $w={3} /><Fit w={37}>Extend</Fit><Gap $w={2} /><Caret s={6} />
    <Gap $w={12} /><svg width="14" height="15" viewBox="0 0 14 15"><path d="M7 .5a4 4 0 0 1 4 4c0 2.500-4 6.500-4 6.500S3 7 3 4.500a4 4 0 0 1 4-4z" fill="#d9a422" /><circle cx="7" cy="4.500" r="1.500" fill="#fff" /><path d="M0 14L2 11.500M14 14L12 11.500M0 14h14" stroke="#777" strokeWidth="1.300" /></svg><Gap $w={3} />
    <Fit w={49}>Select By</Fit><Gap $w={1} /><Caret s={6} /><Gap $w={13} />
    <svg width="15" height="14" viewBox="0 0 15 14"><path d="M0 5h4V2.500L7.500 6.500 4 10" fill="#e0a020" /><path d="M5.500 4L7.500 2H14v8.500L12 13H5.500z" fill="#19c52f" stroke="#1a5a20" /><path d="M5.500 4.500H12V13" fill="none" stroke="#1a5a20" /></svg><Gap $w={2} />
    <Fit w={45}>Convert</Fit><Gap $w={1} /><Caret s={6} /><Gap $w={8} /><Slot $w={8}><svg width="8" height="17" viewBox="0 0 8 17"><path d="M0 12h8l-4 4.500z" fill="#222" /></svg></Slot>
  </Toolbar>
);

const RibbonBar = () => (
  <Ribbon>
    <Group $w={90}>
      <GroupBody>
        <Gap $w={10} />
        <Big $w={50}><BigIcon><svg width="29" height="29" viewBox="0 0 29 29"><path d="M1.500 5v22.500H24" fill="none" stroke="#c9a03a" strokeWidth="3" /><rect x="6.500" y="2" width="20.500" height="21" fill="#fff" stroke="#4a4a4a" strokeWidth="3" /></svg></BigIcon><Fit w={50}>Duplicate</Fit><BigArrow><Caret s={6} /></BigArrow></Big>
        <Gap $w={5} />
        <Big $w={16}><BigIcon><svg width="11" height="11" viewBox="0 0 11 11" stroke="#e0343c" strokeWidth="1.8"><path d="M1 1l9 9M10 1l-9 9" /></svg></BigIcon><svg width="14" height="14" viewBox="0 0 14 14" fill="none" stroke="#666" strokeWidth="1.7"><circle cx="5.800" cy="5.800" r="4.600" /><path d="M9 9l4.500 4.500" strokeWidth="2.200" /></svg></Big>
      </GroupBody>
      <GroupLabel $x={29}><Fit w={36}>Outline</Fit></GroupLabel>
    </Group>
    <Group $w={54}>
      <GroupBody><Gap $w={13} /><Big $w={28}><BigIcon><svg width="20" height="28" viewBox="0 0 20 28"><path d="M8 1h9l-4 8H18l-4.500 6H17L5 27l3-9H2.500L7 12H3z" fill="#f6df1e" stroke="#8a7a30" /></svg></BigIcon><Fit w={27}>Solve</Fit><BigArrow><Caret s={6} /></BigArrow></Big></GroupBody>
      <GroupLabel $x={14}><Fit w={31}>Solver</Fit><svg width="6" height="8" viewBox="0 0 6 8" fill="none" stroke="#888"><path d="M0 1h2M5 3v4H1" /><path d="M2 4l3 3" /></svg></GroupLabel>
    </Group>
    <Group $w={359}>
      <GroupBody>
        <Gap $w={8} />
        <Big $w={42}><BigIcon><svg width="31" height="31" viewBox="0 0 31 31"><rect width="15" height="15" fill="#7bc832" /><rect x="16.500" width="14.500" height="15" fill="#d9474b" /><rect y="16.500" width="15" height="14.500" fill="#c8991a" /><rect x="16.500" y="16.500" width="14.500" height="14.500" fill="#7bc832" /><path d="M3 6l1.500 2L6 6l1.500 2L9 6l1.500 2L12 6M5 21.500h5M7.500 19v5M5 26.500h5M24 20v8M20 19.500v3l4 2 4-2v-3" fill="none" stroke="#fff" strokeWidth="1.2" /><circle cx="24" cy="10" r="2.500" fill="none" stroke="#fff" strokeWidth="1.3" /><path d="M22.500 7.500v-4q1.500-2 3 0v4" fill="none" stroke="#fff" strokeWidth="1.2" /></svg></BigIcon><Fit w={42}>Analysis</Fit><BigArrow><Caret s={6} /></BigArrow></Big>
        <Gap $w={7} />
        <Col $w={122}>
          <Small $off><svg width="15" height="15" viewBox="0 0 15 15" fill="#ddd" stroke="#888"><path d="M3 5l4-4 4 2v5l-4 2-4-1zM1 13h13V8" /><path d="M6 8l5 4" strokeWidth="2" /></svg><Fit w={87}>Named Selection</Fit></Small>
          <Small $off><svg width="15" height="15" viewBox="0 0 15 15" fill="none" stroke="#999" strokeWidth="1.2"><path d="M7.500 1v13M1 4l13 7M14 4L1 11" /><circle cx="7.500" cy="7.500" r="1.500" fill="#fff" /></svg><Fit w={97}>Coordinate System</Fit></Small>
          <Small $off><svg width="15" height="15" viewBox="0 0 15 15" fill="#999" stroke="#888"><path d="M1 5l7-3v5l-7 4z" /><circle cx="12" cy="12" r="1.800" fill="#ccc" /><path d="M8 8l3 3" /></svg><Fit w={69}>Remote Point</Fit></Small>
        </Col>
        <Col $w={83}>
          <Small><svg width="15" height="15" viewBox="0 0 15 15" fill="none" stroke="#666"><path d="M10 4V1H1v12h5M3 4h5M3 6.500h4M3 9h3" /><path d="M13.500 8a3.500 3.500 0 1 0 0 5" stroke="#d09a20" strokeWidth="1.600" /></svg><Fit w={58}>Commands</Fit></Small>
          <Small><svg width="15" height="14" viewBox="0 0 15 14" fill="#fff" stroke="#555"><path d="M.7 1.500h13.500v8H6.500L4 12.500v-3H.7z" /><path d="M4 5.500h7" strokeDasharray="1.200 1.200" /></svg><Fit w={50}>Comment</Fit></Small>
          <Small><svg width="15" height="14" viewBox="0 0 15 14" fill="none" stroke="#666"><path d="M1 0v13h14" /><path d="M4 12V7M7 12V3M10 12V6M13 12V4" stroke="#d0a030" strokeWidth="1.300" /></svg><Fit w={28}>Chart</Fit></Small>
        </Col>
        <Col $w={97}>
          <Small><svg width="15" height="12" viewBox="0 0 15 12" fill="#e6d08a" stroke="#777"><rect x=".5" y="2" width="14" height="9.500" rx="3" /><circle cx="7.500" cy="6.500" r="3" fill="#777" /><path d="M5 1h5" /></svg><Fit w={36}>Images</Fit><Caret s={6} /></Small>
          <Small><svg width="15" height="14" viewBox="0 0 15 14"><path d="M4 4h6v9H4z" fill="#fff" stroke="#777" /><path d="M8 3l6-1.500V12l-6 1.500z" fill="#c9901c" stroke="#555" strokeWidth=".7" /><path d="M1 8V2h5M3.500 0v4" fill="none" stroke="#e02020" strokeWidth="1.400" /></svg><Fit w={70}>Section Plane</Fit></Small>
          <Small><svg width="15" height="14" viewBox="0 0 15 14"><path d="M.7 3h10L14 6.500v3L11 13H.7z" fill="#edd21c" stroke="#8a7a20" /><path d="M12.500 0v5M10 2.500h5" stroke="#e02020" strokeWidth="1.400" /><path d="M3 8.500h8" stroke="#8a7a20" strokeWidth="1.500" strokeDasharray="1.500 1" /></svg><Fit w={60}>Annotation</Fit></Small>
        </Col>
      </GroupBody>
      <GroupLabel $x={167}><Fit w={28}>Insert</Fit></GroupLabel>
    </Group>
    <Group $w={440}>
      <GroupBody>
        <Gap $w={5} />
        <Col $w={146}>
          <Combo><Fit w={108}>2.9e-006 (Auto Scale)</Fit><Caret s={6} /></Combo>
          <Combo><Fit w={76}>Scoped Bodies</Fit><Caret s={6} /></Combo>
          <Small $gap={6} $x={3}><Check><Chk /></Check><Fit w={115}>Large Vertex Contours</Fit></Small>
        </Col>
        <Big $w={50}><BigIcon><Cube a="#c6c6c6" b="#6f6f6f" c="#989898" w={26} /></BigIcon><Fit w={50}>Geometry</Fit><BigArrow><Caret s={6} /></BigArrow></Big>
        <Gap $w={4} />
        <Big $w={49}><BigIcon><svg width="29" height="29" viewBox="0 0 29 29"><defs><linearGradient id="ct" x1="0" y1="0" x2="0" y2="1"><stop offset="0" stopColor="#e02a10" /><stop offset=".25" stopColor="#f8c000" /><stop offset=".38" stopColor="#f0f000" /><stop offset=".58" stopColor="#20d040" /><stop offset=".75" stopColor="#10d8e8" /><stop offset="1" stopColor="#2050d0" /></linearGradient></defs><rect x="1" y="1" width="27" height="27" fill="url(#ct)" stroke="#555" strokeWidth="1.6" /></svg></BigIcon><Fit w={48}>Contours</Fit><BigArrow><Caret s={6} /></BigArrow></Big>
        <Gap $w={8} />
        <Big $w={32}><BigIcon><svg width="31" height="28" viewBox="0 0 31 28" stroke="#444" strokeLinejoin="round"><defs><linearGradient id="eg" x1="0" y1="0" x2="1" y2=".3"><stop offset="0" stopColor="#1848d0" /><stop offset=".25" stopColor="#10c8e0" /><stop offset=".5" stopColor="#40d830" /><stop offset=".75" stopColor="#f0e010" /><stop offset="1" stopColor="#f03010" /></linearGradient></defs><path d="M1 6L12 1 30 9.500V21L20 27 1 18Z" fill="url(#eg)" /><path d="M1 6L20 14.500 30 9.500M20 14.500V27" fill="none" /></svg></BigIcon><Fit w={31}>Edges</Fit><BigArrow><Caret s={6} /></BigArrow></Big>
        <Gap $w={9} /><Sep /><Gap $w={5} />
        <Col $w={75}>
          <Small><Tag t="123" /><Fit w={30}>Probe</Fit></Small><Small><Tag t="MAX" /><Fit w={50}>Maximum</Fit></Small><Small><Tag t="MIN" /><Fit w={48}>Minimum</Fit></Small>
        </Col>
        <Col $w={50}><Small $gap={6}><Check><Chk /></Check><Fit w={27}>Snap</Fit></Small></Col>
      </GroupBody>
      <GroupLabel $x={203}><Fit w={37}>Display</Fit></GroupLabel>
    </Group>
    <Group $w={424}>
      <GroupBody>
        <Gap $w={8} />
        <Big $w={38}><BigIcon><svg width="30" height="28" viewBox="0 0 30 28" strokeWidth="2.2"><path d="M1 6h22" stroke="#e81818" /><path d="M21 1l8 5-8 5z" fill="#e81818" /><path d="M1 15h14" stroke="#20d030" /><path d="M14 11l7 4-7 4.500z" fill="#20d030" /><path d="M1 23.500h8" stroke="#5a94e8" /><path d="M8 19l7 4.500-7 4.500z" fill="#5a94e8" /></svg></BigIcon><Fit w={38}>Vectors</Fit></Big>
        <Gap $w={7} />
        <Col $w={88}>
          <Small $off><svg width="15" height="14" viewBox="0 0 15 14" fill="none" stroke="#999"><path d="M0 2.500h14M11 .5l3 2-3 2M0 7h10M8 5l2.500 2L8 9M0 11.500h6M4.500 9.500l2 2-2 2" /></svg><Fit w={66}>Proportional</Fit></Small>
          <Small $off><svg width="15" height="14" viewBox="0 0 15 14" fill="none" stroke="#999"><path d="M0 2.500h14M11 .5l3 2-3 2M0 7h14M11 5l3 2-3 2M0 11.500h14M11 9.500l3 2-3 2" /></svg><Fit w={42}>Uniform</Fit></Small>
        </Col>
        <Gap $w={1} /><Sep /><Gap $w={7} />
        <Col $w={107}>
          <Small $off><GridDots skew /><Fit w={85}>Element Aligned</Fit></Small>
          <Small $off><GridDots /><Fit w={66}>Grid Aligned</Fit></Small>
          <svg width="90" height="14" viewBox="0 0 90 14" fill="none" stroke="#888"><path d="M3 7.500h86" strokeWidth="2.2" /><path d="M23.500 3v9h-4" stroke="#777" strokeWidth="2.4" /></svg>
        </Col>
        <Gap $w={2} /><Sep /><Gap $w={10} />
        <Col $w={98}>
          <svg width="86" height="16" viewBox="0 0 86 16" fill="none" stroke="#777"><path d="M0 8.500h86" strokeWidth="2.2" /><path d="M41.500 4v9h-4" strokeWidth="2.4" /></svg>
          <Small $off $gap={7}><svg width="6" height="15" viewBox="0 0 6 15" fill="none" stroke="#aaa"><path d="M3 15V1M0 4.500L3 1l3 3.500" /></svg><Fit w={51}>Line Form</Fit></Small>
          <Small $off $gap={3}><svg width="10" height="14" viewBox="0 0 10 14" fill="#ccc"><path d="M5 0l5 6H7v8H3V6H0z" /></svg><Fit w={56}>Solid Form</Fit></Small>
        </Col>
        <Col $w={50}>
          <Small $off><AxisIcon /><Fit w={30}>X Axis</Fit></Small><Small $off><AxisIcon /><Fit w={29}>Y Axis</Fit></Small><Small $off><AxisIcon /><Fit w={30}>Z Axis</Fit></Small>
        </Col>
      </GroupBody>
      <GroupLabel $x={178}><Fit w={72}>Vector Display</Fit></GroupLabel>
    </Group>
    <Group $w={71}>
      <GroupBody><Gap $w={4} /><Big $w={63}>
        <BigIcon><svg width="15" height="14" viewBox="0 0 15 14"><rect width="8" height="3" fill="#f03020" /><rect y="3" width="8" height="3" fill="#f8c020" /><rect y="6" width="8" height="2" fill="#50d030" /><rect y="8" width="8" height="3" fill="#20c0e0" /><rect y="11" width="8" height="3" fill="#3060e0" /><path d="M9.500 1l4 4M13.500 1l-4 4M9 7h5.500M9.500 9l4 4M13.500 9l-4 4" stroke="#444" strokeWidth="1.2" /></svg></BigIcon>
        <Fit w={40}>Capped</Fit><TwoLine><Fit w={53}>Isosurface</Fit><Caret s={6} /></TwoLine>
      </Big></GroupBody>
    </Group>
    <Group $w={45}>
      <GroupBody><Gap $w={8} /><Big $w={30}><BigIcon><svg width="14" height="15" viewBox="0 0 14 15" fill="#fff" stroke="#555"><path d="M.7.7h8l3 3v10.500h-11z" strokeWidth="1.2" /><path d="M3 5h5M3 7.500h4M3 10h5" /><path d="M8.500 12l5-7" stroke="#d8a020" strokeWidth="1.5" /></svg></BigIcon><Fit w={29}>Views</Fit><BigArrow><Caret s={6} /></BigArrow></Big></GroupBody>
    </Group>
  </Ribbon>
);

const BLUE = "#76b4e8";

export default function App() {
  return (
    <Page>
      <Global />
      <TitleBar>
        <TopMark />
        <svg width="30" height="22" viewBox="0 0 30 22"><path d="M10 1L20 11 10 21 0 11Z" fill="#ef443b" /><path d="M17 0L28 11 17 22" fill="none" stroke="#ef6058" strokeWidth="3.2" /></svg>
        <Brand><Fit w={72}>AnyDesk</Fit></Brand>
        <SessionTab><svg width="20" height="18" viewBox="0 0 20 18" fill="none" stroke="#555" strokeWidth="1.3"><rect x=".7" y=".7" width="18.600" height="13.500" /><path d="M10 14v3M6.500 17h7" /></svg><Fit w={90}>363 459 959</Fit></SessionTab>
        <svg width="21" height="19" viewBox="0 0 21 19" fill="none" stroke="#666" strokeWidth="1.4"><path d="M12 15H3q-2 0-2-2V3q0-2 2-2h14.500q2 0 2 2v7M15.500 10.500v8M11.500 14.500h9M7 18h6" /></svg>
        <WinButtons>
          <Slot $w={56}><svg width="29" height="29" viewBox="0 0 29 29"><circle cx="14.500" cy="14.500" r="14" fill="#454545" /><circle cx="14.500" cy="9.500" r="2" fill="#fff" /><path d="M10.500 14q1 3 4 4.500 3-1.500 4-4.500" fill="none" stroke="#fff" strokeWidth="2.6" /></svg></Slot>
          <Slot $w={60}><svg width="13" height="2"><rect width="13" height="1.500" fill="#555" /></svg></Slot>
          <Slot $w={52}><svg width="12" height="13" viewBox="0 0 12 13" fill="none" stroke="#555" strokeWidth="1.3"><rect x=".7" y="3" width="8.500" height="9" /><path d="M3 3V.7h8.300V10H9" /></svg></Slot>
          <Slot $w={55}><svg width="13" height="13" viewBox="0 0 13 13" stroke="#555" strokeWidth="1.3"><path d="M.7.7l11.600 11.600M12.300.7L.7 12.300" /></svg></Slot>
        </WinButtons>
      </TitleBar>
      <AddressBar>
        <svg width="20" height="20" viewBox="0 0 20 20"><circle cx="10" cy="10" r="10" fill="#1f9e33" /><path d="M4.500 10.500L8.500 14.500 15.500 6" fill="none" stroke="#fff" strokeWidth="2.8" /></svg>
        <AddressField>
          <svg width="20" height="19" viewBox="0 0 21 19" preserveAspectRatio="none"><rect width="21" height="15.500" rx="2" fill="#25ad36" /><path d="M7 17.500h7" stroke="#25ad36" strokeWidth="2" /><path d="M6.500 8L9.500 11 14.500 5" fill="none" stroke="#d8f5dc" strokeWidth="1.4" /></svg>
          <FieldSep /><Fit w={90}>363459959</Fit><Gap $w={1150} />
          <Slot $w={40}><Monitor c="#999"><path d="M4 8q6.500-6 13 0-6.500 6-13 0M4 15L17 2" strokeWidth="1.2" /><circle cx="10.500" cy="8" r="2" strokeWidth="1" /></Monitor></Slot>
          <Slot $w={40}><svg width="14" height="19" viewBox="0 0 14 19" fill="none" stroke="#999" strokeWidth="1.3"><path d="M1 1h12M1 17h12M2.500 1v3.500L7 9l4.500-4.500V1M2.500 17v-3L7 9l4.500 5v3" /><path d="M4 16l3-3 3 3z" fill="#999" /></svg></Slot>
          <Slot $w={39}><svg width="18" height="19" viewBox="0 0 18 19" fill="none" stroke="#aaa" strokeWidth="1.3"><ellipse cx="9" cy="3.500" rx="8" ry="2.800" /><path d="M1 3.500V15q0 3 8 3t8-3V3.500M1 7.500q0 3 8 3t8-3M1 11.500q0 3 8 3t8-3" /></svg></Slot>
          <Slot $w={36}><svg width="20" height="19" viewBox="0 0 20 19" fill="none" stroke="#333" strokeWidth="1"><path d="M10 1l2.300 6h6.500l-5.200 4 2 7-5.600-4-5.600 4 2-7-5.200-4h6.500zM10 6l1.200 3h3l-2.400 2 1 3-2.800-1.800L7.200 14l1-3-2.400-2h3z" /></svg></Slot>
          <Gap $w={15} />
          <Slot $w={36}><svg width="16" height="19" viewBox="0 0 16 19" fill="none" stroke="#111" strokeWidth="1.4"><path d="M3 1h7.500L14.500 5v11q0 2-2 2H3q-2 0-2-2V3q0-2 2-2zM3 9.500h8M8 6l3.500 3.500L8 13" /></svg></Slot>
          <Gap $w={3} />
          <ActiveTool><Monitor c="#111"><path d="M8.500 6l2.500-2v9" strokeWidth="1.3" /></Monitor><svg width="5" height="7" viewBox="0 0 5 7"><circle cx="2.500" cy="4.500" r="2" fill="#e04a44" /></svg></ActiveTool>
          <Gap $w={2} />
          <Slot $w={40}><Monitor /></Slot>
          <Slot $w={40}><svg width="21" height="19" viewBox="0 0 21 19" fill="none" stroke="#111" strokeWidth="1.4"><path d="M1 1h19v13.500h-2.500V18l-4-3.500H1zM5 5.500h11M5 9.500h7" /></svg></Slot>
          <Slot $w={40}><svg width="11" height="21" viewBox="0 0 11 21"><path d="M4.500 0h4.500L6.500 7.500h4L3 21l2-10H1z" fill="#111" /></svg></Slot>
          <Slot $w={40}><svg width="20" height="13" viewBox="0 0 20 13" fill="none" stroke="#111" strokeWidth="1.3"><rect x=".7" y=".7" width="18.600" height="11.600" rx="1" /><path d="M3 4h14M3 6.500h14M3 9h14" strokeDasharray="1.300 1" strokeWidth="1.5" /></svg></Slot>
          <Slot $w={40}><svg width="18" height="20" viewBox="0 0 18 20" fill="none" stroke="#111" strokeWidth="1.3"><path d="M1 2h16v7q0 7-8 10-8-3-8-10zM9 2v17M1 9h16" /></svg></Slot>
          <Slot $w={40}><Monitor c="#888"><circle cx="10.500" cy="8" r="3.800" fill="#f08880" stroke="none" /></Monitor></Slot>
          <Slot $w={40}><svg width="19" height="20" viewBox="0 0 19 20" fill="none" stroke="#111" strokeWidth="1.4"><path d="M1 18.500h18M2.500 17.500L8 2.500q1-1.800 2.500-1T11 4L5.500 15z" /></svg></Slot>
        </AddressField>
        <Gap $w={18} />
        <svg width="20" height="21" viewBox="0 0 20 21" stroke="#444" strokeWidth="1.4"><path d="M0 1h20M0 7.500h20M0 13.500h20M0 20h20" /></svg>
      </AddressBar>
      <LicenseBar><Fit w={279}>Free license (non-professional use).</Fit><Link><Fit w={136}><u>Start trial license</u></Fit></Link><Fit w={17}>or</Fit><Link><Fit w={33}><u>buy.</u></Fit></Link></LicenseBar>

      <Stage>
        <Remote>
          <AppTitle>
            <Gap $w={8} /><Gears /><Gap $w={7} /><ToolSep /><Gap $w={6} />
            <svg width="14" height="15" viewBox="0 0 14 15" fill="#eef5fd" stroke="#6aa2dc" strokeWidth="1.2"><path d="M.6.6h11l1.800 1.800v12H.6zM3.500.6v5h7v-5M3.500 14V9.500h7V14M6 12v2" /></svg><Gap $w={6} />
            <svg width="8" height="7" viewBox="0 0 8 7"><path d="M0 .7h8" stroke="#666" /><path d="M0 2.500h8L4 6.500z" fill="#666" /></svg>
            <Gap $w={59} /><Context><Fit w={40}>Context</Fit></Context>
            <Gap $w={434} /><Fit w={327}>B : Static Structural - Mechanical [ANSYS Mechanical Enterprise]</Fit>
            <Gap $w={517} />
            <Slot $w={34}><svg width="10" height="2"><rect width="10" height="2" fill="#222" /></svg></Slot>
            <Slot $w={35}><svg width="10" height="11" viewBox="0 0 10 11" fill="none" stroke="#222" strokeWidth="1.4"><rect x=".7" y="4" width="6.300" height="6" /><path d="M3 4V1h6.300v6H7" /></svg></Slot>
            <Slot $w={34}><svg width="11" height="11" viewBox="0 0 11 11" stroke="#222" strokeWidth="2"><path d="M1 1l9 9M10 1l-9 9" /></svg></Slot>
          </AppTitle>
          <TabRow>
            <FileTab><Fit w={17}>File</Fit></FileTab>
            <Gap $w={22} /><Fit w={30}>Home</Fit><Gap $w={17} /><ActiveTab><Fit w={32}>Result</Fit></ActiveTab>
            <Gap $w={15} /><Fit w={38}>Display</Fit><Gap $w={30} /><Fit w={48}>Selection</Fit><Gap $w={29} /><Fit w={62}>Automation</Fit>
            <Gap $w={925} /><QuickLaunch><Fit w={70}>Quick Launch</Fit></QuickLaunch>
            <Gap $w={4} /><Chev c="#d0a030" up s={12} /><Gap $w={8} />
            <svg width="15" height="15" viewBox="0 0 15 15" fill="none" stroke="#666" strokeWidth="1.2"><path d="M1 3l11.500-2L14 12.500 3 14z" /><path d="M4 7l3.500 4L12 3" stroke="#d0a020" strokeWidth="1.7" /></svg><Gap $w={8} />
            <svg width="14" height="14" viewBox="0 0 14 14"><circle cx="7" cy="7" r="7" fill="#5898e8" /><text x="7" y="11" fontSize="11" fontWeight="700" fill="#fff" textAnchor="middle" fontFamily="Noto Sans">?</text></svg><Caret c="#222" s={6} />
          </TabRow>
          <RibbonBar />
          <Body>
            <Left>
              <PanelHead><Fit w={40}>Outline</Fit><Dots $w={246} /><HeadTools /></PanelHead>
              <SearchRow>
                <Grip $h={18} /><Gap $w={8} /><NameBox><Fit w={33}>Name</Fit><Caret /></NameBox><Gap $w={1} /><SearchBox><Fit w={78}>Search Outline</Fit></SearchBox>
                <Gap $w={5} /><Chev c="#d0a030" s={12} /><Gap $w={7} /><svg width="7" height="15" viewBox="0 0 7 15"><path d="M0 11h7L3.500 15z" fill="#222" /></svg>
              </SearchRow>
              <Scrolled $h={357}>
                <Tree>
                  {nodes.map((n, i) => (
                    <TreeRow key={n.t}>
                      <Guide $w={i <= 3 ? 23 : 51} $line />
                      <Joint box={n.box} end={i === 3} />
                      <TreeCheck /><Gap $w={1} /><TreeIcon k={n.k} />
                      <Gap $w={i <= 3 ? 3.5 : 3} />
                      <TreeLabel $hot={n.k === "sol"} $sel={n.sel}><Fit w={n.w}>{n.t}</Fit></TreeLabel>
                    </TreeRow>
                  ))}
                </Tree>
                <ScrollBar><Chev c="#555" up /><Thumb $t={125} $h={170} $b={36} /><Chev c="#555" /></ScrollBar>
              </Scrolled>
              <PanelGap />
              <PanelHead><Fit w={160}>Details of "Total Deformation"</Fit><Dots $w={126} /><HeadTools /></PanelHead>
              <Scrolled $h={231}>
                <Details>
                  {details.map((d, i) => (
                    <DetailRow key={i}>
                      <Gutter>{d.h && <svg width="9" height="9" viewBox="0 0 9 9" fill="#fff" stroke="#888"><rect x=".5" y=".5" width="8" height="8" /><path d="M2.500 4.500h4" stroke="#222" /></svg>}</Gutter>
                      {d.h ? <Cell $w={338} $bold><Fit w={d.h[1]}>{d.h[0]}</Fit></Cell> : (
                        <>
                          <Cell $w={124}>{d.box && <SmallBox />}<Fit w={d.l![1]}>{d.l![0]}</Fit></Cell>
                          <Cell $w={214} $ro={d.ro}>{d.v && <Fit w={d.v[1]}>{d.v[0]}</Fit>}</Cell>
                        </>
                      )}
                    </DetailRow>
                  ))}
                </Details>
                <ScrollBar><Chev c="#555" up /><Thumb $t={4} $h={139} $b={61} /><Chev c="#555" /></ScrollBar>
              </Scrolled>
              <BottomTabs><Fit w={78}>Section Planes</Fit><DetailsTab><Fit w={36}>Details</Fit></DetailsTab></BottomTabs>
            </Left>
            <Right>
              <GraphicsToolbar />
              <Viewport>
                <At $x={14} $y={15}>
                  <Info><Strong><Fit w={107}>B: Static Structural</Fit></Strong><Fit w={98}>Total Deformation</Fit><Fit w={130}>Type: Total Deformation</Fit><Fit w={51}>Unit: mm</Fit><Fit w={47}>Time: 1 s</Fit><Fit w={99}>{"13/07/2023 06:48 م"}</Fit></Info>
                </At>
                <At $x={15} $y={128}>
                  <Legend>
                    <LegendBar>{swatches.map((c) => <Swatch key={c} $c={c} />)}</LegendBar>
                    <LegendText><Strong><Fit w={80}>2.8253e5 Max</Fit></Strong>{legend.map(([t, w]) => <Fit key={t} w={w}>{t}</Fit>)}<Strong><Fit w={31}>0 Min</Fit></Strong></LegendText>
                  </Legend>
                </At>
                <At $x={400} $y={66}><Model /></At>
                <At $x={1071} $y={19}>
                  <Wordmark><svg width="34" height="40" viewBox="0 0 34 40" fill="#fff"><path d="M0 34L13 6H19L7.500 34ZM16.500 13.500L20 7 32 34H24.500Z" /></svg><Fit w={81}>nsys</Fit></Wordmark>
                </At>
                <At $x={1119} $y={60}><Version><Fit w={67}>2022 R1</Fit></Version></At>
                <At $x={393} $y={589}>
                  <ScaleTop><Fit w={27}>0.000</Fit><Gap $w={161} /><Fit w={28}>4.500</Fit><Gap $w={164} /><Fit w={27}>9.000</Fit><Gap $w={3} /><Fit w={29}>(mm)</Fit></ScaleTop>
                  <ScaleBar>{[true, false, true, false].map((b, i) => <ScaleSeg key={i} $on={b} />)}</ScaleBar>
                  <ScaleTop $t={6}><Gap $w={94} /><Fit w={27}>2.250</Fit><Gap $w={164} /><Fit w={27}>6.750</Fit></ScaleTop>
                </At>
                <At $x={1090} $y={480}>
                  <svg width="104" height="120" viewBox="0 0 104 120">
                    <defs><radialGradient id="ball" cx=".35" cy=".3"><stop offset="0" stopColor="#40e0e0" /><stop offset="1" stopColor="#007c84" /></radialGradient></defs>
                    <circle cx="17" cy="100" r="6" fill="#0c10c0" /><path d="M12 92l10 13-8 1z" fill="#000080" />
                    <path d="M13 93V42" stroke="#0a7a0a" strokeWidth="3.5" /><path d="M13 24l6.500 18.500h-13z" fill="#0a8a0a" />
                    <path d="M14 92h48" stroke="#b00c0c" strokeWidth="4" /><path d="M79 92L62 85.500v13z" fill="#c01010" />
                    <circle cx="47" cy="66.500" r="6.800" fill="url(#ball)" />
                    <text x="13" y="15" fontSize="12" fill="#35b050" fontFamily="Noto Sans">Y</text><text x="89" y="93" fontSize="12" fill="#e84848" fontFamily="Noto Sans">X</text><text x="20" y="105" fontSize="11" fill="#2020d0" fontFamily="Noto Sans">Z</text>
                  </svg>
                </At>
              </Viewport>
            </Right>
          </Body>
          <Status>
            <Fit w={33}>Ready</Fit><Gap $w={1006} />
            <svg width="17" height="15" viewBox="0 0 17 16"><path d="M1 3h13v8H7l-3 4v-4H1z" fill="#f3d878" /><circle cx="10" cy="6" r="5.800" fill="#1c2fb0" /><path d="M10 5v4M10 2.500v1.300" stroke="#fff" strokeWidth="1.8" /></svg><Gap $w={1} />
            <Fit w={62}>3 Messages</Fit><Gap $w={18} /><Fit w={69}>No Selection</Fit><Gap $w={22} />
            <svg width="9" height="7" viewBox="0 0 9 7"><path d="M0 6.500h9L4.500 0z" fill="#fff" /></svg><Gap $w={6} />
            <Fit w={164}>Metric (mm, kg, N, s, mV, mA)</Fit><Gap $w={12} /><Fit w={43}>Degrees</Fit><Gap $w={13} /><Fit w={27}>rad/s</Fit><Gap $w={12} /><Fit w={38}>Celsius</Fit>
          </Status>
          <RemoteTaskbar>
            <TaskSlot $w={48}><Win s={17} /></TaskSlot>
            <TaskSlot $w={52}><svg width="24" height="24" viewBox="0 0 24 24" fill="none" stroke="#fff" strokeWidth="2"><circle cx="14" cy="9" r="7.500" /><path d="M9 15l-7 8" /></svg></TaskSlot>
            <TaskSlot $w={46}><TaskView s={18} /></TaskSlot><Gap $w={4} />
            <TaskSlot $w={48} $bg="#3a3a3a" $line={BLUE}><Explorer w={24} h={20} /></TaskSlot>
            <TaskSlot $w={55}><Chrome s={25} /></TaskSlot><Gap $w={2} />
            <TaskSlot $w={41} $bg="linear-gradient(90deg,#3f7c3e 80%,#4a4a4a 80%)" $line="#5ed24a"><AnyTile w={24} h={25} /></TaskSlot>
            <Gap $w={9} /><TaskSlot $w={42} $line={BLUE}><svg width="25" height="25" viewBox="0 0 25 25"><rect width="25" height="25" fill="#000" /><path d="M12.500 1l3.500 2v3.500l-3.500 2-3.500-2V3zM9 8l3.500 2v3L9 15l-3.500-2v-3zM16 8l3.500 2v3L16 15l-3.500-2v-3z" fill="none" stroke="#e0a82c" strokeWidth="1.5" /><text x="12.500" y="24" fontSize="9.500" fontWeight="700" fill="#fff" textAnchor="middle" fontFamily="Noto Sans">WB</text></svg></TaskSlot>
            <Gap $w={4} /><TaskSlot $w={52}><svg width="25" height="25" viewBox="0 0 25 25"><ellipse cx="11" cy="8" rx="9.500" ry="6.500" fill="#eee" stroke="#c03030" transform="rotate(20 11 8)" /><path d="M3 6l14 9M13 3l1 13" stroke="#b04040" strokeWidth="1.200" /><circle cx="14" cy="20" r="3" fill="none" stroke="#4a94d0" strokeWidth="2" /><circle cx="20.500" cy="16" r="2.800" fill="none" stroke="#4a94d0" strokeWidth="2" /></svg></TaskSlot>
            <Gap $w={4} /><TaskSlot $w={42} $line={BLUE}><svg width="24" height="25" viewBox="0 0 24 25"><ellipse cx="13" cy="12" rx="11" ry="12" fill="#c83c28" /><circle cx="14" cy="11" r="6" fill="#fff" /><text x="14" y="15" fontSize="10" fontWeight="700" fill="#d03c28" textAnchor="middle" fontFamily="Noto Sans">C</text><path d="M0 20l4-8 7 6-4 6z" fill="#e8c8a0" /><circle cx="4" cy="20" r="2.500" fill="#2a80d0" /></svg></TaskSlot>
            <Gap $w={8} /><TaskSlot $w={43} $line={BLUE}><svg width="25" height="25" viewBox="0 0 25 25"><path d="M18 0l6.500 3v19L18 25 7 14.500 3 18 .5 16.500 5 12.500.5 8.500 3 7l4 3.500zM18 7.500L11.500 12.500 18 17.500z" fill="#2a9be8" /></svg></TaskSlot>
            <Gap $w={7} /><TaskSlot $w={42} $line={BLUE}><svg width="23" height="24" viewBox="0 0 23 24"><path d="M2 4l19-2v13H6z" fill="#dfe8ee" stroke="#aab" /><path d="M6 10l3-3 3 5 3-4 3 3" fill="none" stroke="#58a" strokeWidth="1.3" /><path d="M4 15l14 1-4 6-7-1z" fill="#a8acb0" /><path d="M15 14l5 1-2 6-4-1z" fill="#ccd0d4" /></svg></TaskSlot>
            <Gap $w={10} /><TaskSlot $w={41} $line={BLUE}><svg width="23" height="18" viewBox="0 0 23 18"><rect x=".5" y=".5" width="22" height="17" fill="#0c0c0c" stroke="#999" /><path d="M1 2h21" stroke="#ccc" strokeWidth="1.6" /><path d="M3 6h6" stroke="#ddd" /></svg></TaskSlot>
            <Gap $w={5} /><TaskSlot $w={50} $bg="#4d4d4d" $line={BLUE}><Gears w={25} h={25} m /></TaskSlot>
            <Gap $w={5} /><TaskSlot $w={42} $line={BLUE}><svg width="24" height="25" viewBox="0 0 24 25"><rect width="24" height="25" rx="3" fill="#0c1a68" /><circle cx="12" cy="12.500" r="10" fill="#fff" /><path d="M3.500 12.500l5-4v2.500h7V8.500l5 4-5 4V14h-7v2.500z" fill="#0c1a68" /></svg></TaskSlot>
            <Gap $w={445} />
            <Slot $w={34}><svg width="24" height="24" viewBox="0 0 24 24"><circle cx="12" cy="13" r="10.500" fill="#f0821e" /><circle cx="17" cy="6" r="5.500" fill="#d03028" /><path d="M16 4.500l1.500-1v5.500" fill="none" stroke="#fff" /></svg></Slot>
            <Gap $w={3} /><Slot $w={31} $f={16}><Fit w={31}>39°C</Fit></Slot><Gap $w={9} /><Slot $w={46} $f={15}><Fit w={46}>مشمس</Fit></Slot>
            <Gap $w={19} /><Slot $w={24}><Chev c="#eee" up s={13} t={1} /></Slot>
            <Slot $w={25}><svg width="17" height="15" viewBox="0 0 17 15" fill="none" stroke="#fff" strokeWidth="1.2"><path d="M4 2h12v9H4zM10 11v3M6 14h8" /><rect x=".6" y="1" width="4" height="4" fill="#1e1e1e" /></svg></Slot>
            <Slot $w={24}><Meet s={19} /></Slot>
            <Slot $w={25}><svg width="15" height="17" viewBox="0 0 15 17"><path d="M7 0l7 2v5q0 6-7 9-7-3-7-9V2z" fill="#f4f4f4" /><path d="M7 0v16M0 7.500h14" stroke="#777" /><path d="M10.500 8l4.500 9H6z" fill="#f8c020" /><path d="M10.500 11v3" stroke="#222" strokeWidth="1.3" /></svg></Slot>
            <Slot $w={25}><Speaker s={18} /></Slot>
            <Slot $w={34} $f={14}>ع</Slot><Gap $w={7} />
            <Clock><Fit w={39}>06:48 م</Fit><Fit w={56}>٢٠٢٣/٠٧/١٣</Fit></Clock>
            <Gap $w={16} /><Slot $w={20}><Notify s={17} /></Slot><Gap $w={18} /><EndLine />
          </RemoteTaskbar>
        </Remote>
      </Stage>

      <Taskbar>
        <TaskSlot $w={59}><Win s={20} /></TaskSlot>
        <TaskSlot $w={62}><TaskView s={21} /></TaskSlot><Gap $w={7} />
        <TaskSlot $w={52}><svg width="30" height="30" viewBox="0 0 30 30"><defs><linearGradient id="e1" x1="0" y1="0" x2="1" y2="0"><stop offset="0" stopColor="#2aa4e0" /><stop offset="1" stopColor="#5fd860" /></linearGradient></defs><circle cx="15" cy="15" r="15" fill="#1769c0" /><path d="M0 14C1 5 8 0 15 0c9 0 15 6 15 13 0 5-4 7-8 7-5 0-5-2-4-4 1-3-1-7-6-7-5 0-10 2-12 5z" fill="url(#e1)" /><path d="M10 17c0 7 6 12 13 11-3 2-6 2-9 2-5-1-9-6-9-12 0-5 4-8 9-8-3 2-4 4-4 7z" fill="#0f4f9c" /><path d="M18 16c-1 2-1 4 4 4 3 0 5-1 7-2-1 4-4 5-8 5-5 0-7-3-6-6 0-1 2-3 3-1z" fill="#253842" /></svg></TaskSlot>
        <Gap $w={10} /><TaskSlot $w={52} $line={BLUE}><Explorer w={29} h={24} /></TaskSlot>
        <Gap $w={10} /><TaskSlot $w={52}><svg width="30" height="30" viewBox="0 0 30 30" fill="none" strokeWidth="1.8"><rect width="30" height="30" rx="6" fill="#050505" /><path d="M26 27V14a11.500 11.500 0 1 0-5 11" stroke="#38d048" /><path d="M23.500 25V15a9 9 0 1 0-4 8" stroke="#c8e030" /><path d="M21 22v-6a6.500 6.500 0 1 0-3 5" stroke="#b040e0" /><circle cx="15" cy="16" r="3.800" stroke="#20b0e0" /></svg></TaskSlot>
        <Gap $w={10} /><TaskSlot $w={52}><svg width="28" height="28" viewBox="0 0 28 28"><defs><linearGradient id="pe" x1="0" y1="0" x2="1" y2="1"><stop offset="0" stopColor="#f4f060" /><stop offset=".5" stopColor="#40d880" /><stop offset="1" stopColor="#18c878" /></linearGradient></defs><rect width="28" height="28" fill="url(#pe)" /><rect x="4.500" y="4.500" width="19" height="19" fill="#000" /><text x="12.500" y="14" fontSize="9.500" fontWeight="700" fill="#fff" textAnchor="middle" fontFamily="Noto Sans">PE</text><path d="M6.500 21h7" stroke="#fff" strokeWidth="1.5" /></svg></TaskSlot>
        <Gap $w={10} /><TaskSlot $w={52}><svg width="30" height="30" viewBox="0 0 30 30" fill="none" stroke="#dcdcdc" strokeWidth="1.3"><path d="M15 0v30M1.500 8.500L15 15 28.500 8.500M4 25L15 15 26 25M15 3l10 6 2 10-6 8H9l-6-8L5 9zM15 8.500l5.500 3.500 1 6-3.500 4h-6l-3.500-4 1-6z" /><path d="M5 17l5-3 5 5 5-5 5 3" stroke="#e02828" strokeWidth="3" /></svg></TaskSlot>
        <Gap $w={10} /><TaskSlot $w={52}><svg width="27" height="29" viewBox="0 0 27 29"><defs><linearGradient id="m3" x1="0" y1="0" x2="1" y2="1"><stop offset="0" stopColor="#4a5ac8" /><stop offset=".5" stopColor="#4aa0e8" /><stop offset="1" stopColor="#a078e0" /></linearGradient></defs><path d="M9 1l5-1 12 7v14l-12 8L1 22V8z" fill="url(#m3)" /><path d="M14 0l12 7v6l-9-4z" fill="#58b8f0" /><path d="M10 9l6-1 3 3v7l-6 3-4-3z" fill="#253842" /><path d="M1 20l12-2 13 3-12 8z" fill="#9a6ad8" opacity=".8" /></svg></TaskSlot>
        <Gap $w={6} /><TaskSlot $w={61} $bg="#66757c" $line={BLUE}><AnyTile w={30} h={30} /></TaskSlot>
        <Gap $w={5} /><TaskSlot $w={52}><svg width="28" height="28" viewBox="0 0 28 28"><circle cx="14" cy="14" r="14" fill="#6f2da8" /><g transform="translate(3 3)"><FaGithub size={22} color="#fff" /></g></svg></TaskSlot>
        <Gap $w={10} /><TaskSlot $w={52}><svg width="30" height="30" viewBox="0 0 30 30"><circle cx="15" cy="15" r="15" fill="#5865f2" /><g transform="translate(6 6)"><FaDiscord size={18} color="#fff" /></g></svg></TaskSlot>
        <Gap $w={10} /><TaskSlot $w={52}><svg width="28" height="28" viewBox="0 0 28 28"><circle cx="14" cy="14" r="13.500" fill="#2aa0d0" /><path d="M3 3q5 0 8 5 5-6 11-6-2 4-4 5 1 8-4 10-5-1-9 1 3-3 4-6-5-3-6-9z" fill="#fff" /><path d="M7 20.500h14" stroke="#d8f0fa" strokeWidth="1.8" strokeDasharray="3 1" /></svg></TaskSlot>
        <Gap $w={10} /><TaskSlot $w={52} $line={BLUE}><svg width="34" height="32" viewBox="0 0 34 32"><circle cx="16" cy="14" r="14" fill="#2a9fd8" /><g transform="translate(5 4)"><FaTelegramPlane size={19} color="#fff" /></g><rect x="14" y="18" width="19" height="13" rx="6" fill="#e8403c" /><text x="23.500" y="28.500" fontSize="11" fill="#fff" textAnchor="middle" fontFamily="Noto Sans">375</text></svg></TaskSlot>
        <Gap $w={10} /><TaskSlot $w={52}><Chrome s={30} /></TaskSlot>
        <Gap $w={9} /><TaskSlot $w={52} $line={BLUE}><svg width="29" height="30" viewBox="0 0 29 30"><path d="M0 0h22l7 7v23H0z" fill="#f58220" /><path d="M22 0l7 7h-7z" fill="#a85410" /><path d="M21 6.500q-9-2-12 3-2 8 3 10 6 2 8-3 1-6-4-5-3 1-2 4" fill="none" stroke="#fff" strokeWidth="2.6" /><text x="14.500" y="28" fontSize="7" fontWeight="700" fill="#fff" textAnchor="middle" fontFamily="Noto Sans">PDF</text></svg></TaskSlot>
        <Gap $w={11} /><TaskSlot $w={52} $line={BLUE}><svg width="32" height="32" viewBox="0 0 32 32"><g transform="translate(0 0)"><Chrome s={29} /></g><circle cx="23" cy="23" r="8.500" fill="#f8d030" /><path d="M23 17l4 6-1.500 6h-5L19 23z" fill="#fff" /><rect x="21" y="24" width="4.500" height="5" fill="#1d4a30" /></svg></TaskSlot>
        <Gap $w={9} /><TaskSlot $w={52} $line={BLUE}><svg width="29" height="28" viewBox="0 0 29 28"><rect x="7" width="22" height="7" fill="#41a5ee" /><rect x="7" y="7" width="22" height="7" fill="#2b7cd3" /><rect x="7" y="14" width="22" height="7" fill="#185abd" /><rect x="7" y="21" width="22" height="7" fill="#103f91" /><rect y="6" width="16" height="16" rx="1" fill="#185abd" /><text x="8" y="18.500" fontSize="12" fontWeight="700" fill="#fff" textAnchor="middle" fontFamily="Noto Sans">W</text></svg></TaskSlot>
        <Gap $w={10} /><TaskSlot $w={52} $line={BLUE}><svg width="30" height="28" viewBox="0 0 30 28"><path d="M0 9L15 0 30 9V28H0z" fill="#0f5fa8" /><path d="M3 9h24v10H3z" fill="#f4f4f4" /><path d="M0 9l15 11L30 9v19H0z" fill="#28a8ea" /><path d="M0 28l15-12 15 12z" fill="#48c0f4" /></svg></TaskSlot>
        <Gap $w={10} /><TaskSlot $w={52} $line={BLUE}><svg width="29" height="28" viewBox="0 0 29 28"><circle cx="15" cy="14" r="14" fill="#ed6c47" /><path d="M15 0a14 14 0 0 1 14 14H15z" fill="#ff8f6b" /><path d="M15 14h14a14 14 0 0 1-20 12z" fill="#d35230" /><rect y="6" width="16" height="16" rx="1" fill="#c43e1c" /><text x="8" y="18.500" fontSize="12" fontWeight="700" fill="#fff" textAnchor="middle" fontFamily="Noto Sans">P</text></svg></TaskSlot>
        <Gap $w={374} />
        <Slot $w={30}><Chev c="#fff" up s={16} t={1} /></Slot>
        <Slot $w={31}><Meet s={20} /></Slot>
        <Slot $w={29}><svg width="20" height="20" viewBox="0 0 20 20" fill="none" stroke="#fff" strokeWidth="1.3"><path d="M1 3.500L18 1v11M1 3.500V18l9 1M6 9q3-4 7 0M13 6v3.500h-3.500M6 13v-3h3M6 11q2 4 5 2" /><circle cx="14.500" cy="15" r="4.500" fill="#2f78c8" stroke="none" /></svg></Slot>
        <Slot $w={30}><svg width="20" height="14" viewBox="0 0 20 14"><rect x="5" y="3" width="13" height="9" fill="#fff" stroke="#fff" /><path d="M19 5.500v4" stroke="#fff" strokeWidth="1.5" /><path d="M1 1v3q2 2 4 0V1M3 5v4h2" fill="none" stroke="#fff" strokeWidth="1.2" /></svg></Slot>
        <Slot $w={31}><svg width="16" height="15" viewBox="0 0 17 16" fill="none" stroke="#ddd" strokeWidth="1.2"><path d="M1 14.500Q3 3 15.500 1M5 14.500q1.500-8 10.500-9M9 14.500q1-4.500 6.500-5" /><circle cx="14" cy="13.500" r="1.500" fill="#fff" /></svg></Slot>
        <Slot $w={28}><Speaker s={19} /></Slot>
        <Gap $w={10} /><Slot $w={28} $f={15}><Fit w={28}>ENG</Fit></Slot><Gap $w={17} />
        <MainClock><Fit w={51}>6:48 PM</Fit><Fit w={67}>7/13/2023</Fit></MainClock>
        <Gap $w={22} /><Slot $w={22}><Notify s={20} /></Slot><Gap $w={24} /><EndLine />
      </Taskbar>
    </Page>
  );
}
